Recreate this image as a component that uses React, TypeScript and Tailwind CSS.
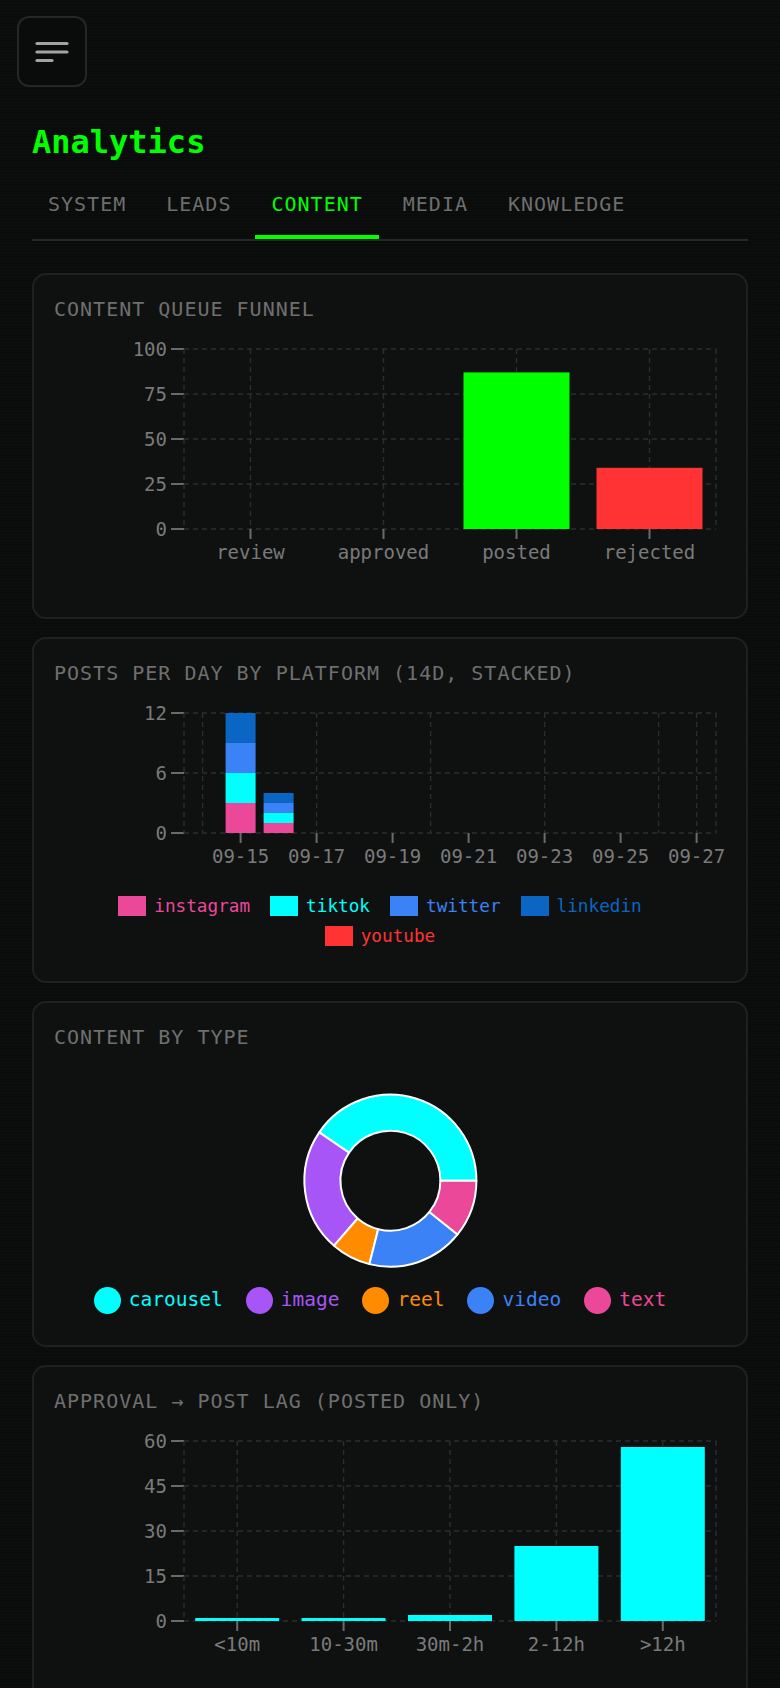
import React from 'react';

const tabs = ['SYSTEM', 'LEADS', 'CONTENT', 'MEDIA', 'KNOWLEDGE'];

// plot box shared by the bar charts (svg coords)
const PL = 130;
const PR = 662;
const PT = 26;

const funnel = [
  { label: 'review', value: 0, color: '#00ff00' },
  { label: 'approved', value: 0, color: '#00ff00' },
  { label: 'posted', value: 87, color: '#00ff00' },
  { label: 'rejected', value: 34, color: '#ff3333' },
];

const lag = [
  { label: '<10m', value: 1 },
  { label: '10-30m', value: 1 },
  { label: '30m-2h', value: 2 },
  { label: '2-12h', value: 25 },
  { label: '>12h', value: 58 },
];

const platforms = [
  { name: 'instagram', color: '#ec4899' },
  { name: 'tiktok', color: '#00ffff' },
  { name: 'twitter', color: '#3b82f6' },
  { name: 'linkedin', color: '#0a66c2' },
  { name: 'youtube', color: '#ff3333' },
];

// day index 1 = 09-15
const dailyPosts: { day: number; counts: number[] }[] = [
  { day: 1, counts: [3, 3, 3, 3, 0] },
  { day: 2, counts: [1, 1, 1, 1, 0] },
];

const types = [
  { name: 'carousel', value: 49, color: '#00ffff' },
  { name: 'image', value: 28, color: '#a855f7' },
  { name: 'reel', value: 9, color: '#ff8c00' },
  { name: 'video', value: 22, color: '#3b82f6' },
  { name: 'text', value: 13, color: '#ec4899' },
];

const GRID = '#2b2e2e';
const TICK = '#6a6a6a';
const LABEL = '#7a7a7a';

const Card: React.FC<{ title: string; children: React.ReactNode }> = ({ title, children }) => (
  <div className="h-[346px] rounded-[14px] border-2 border-[#1e2121] bg-[#0f1111] p-5">
    <div className="text-[20px] leading-[28px] tracking-[0.05em] text-[#6f6f6f]">{title}</div>
    {children}
  </div>
);

// dashed grid + y ticks
const YAxis: React.FC<{ ticks: number[]; max: number; bottom: number; vlines: number[] }> = ({ ticks, max, bottom, vlines }) => {
  const scale = (bottom - PT) / max;
  return (
    <g>
      {ticks.map((t) => {
        const y = bottom - t * scale;
        return (
          <g key={t}>
            <line x1={PL} x2={PR} y1={y} y2={y} stroke={GRID} strokeWidth={1.4} strokeDasharray="5 4" />
            <line x1={117} x2={PL} y1={y} y2={y} stroke={TICK} strokeWidth={2} />
            <text x={113} y={y + 7} textAnchor="end" fontSize={19} fill={LABEL}>
              {t}
            </text>
          </g>
        );
      })}
      {[PL, ...vlines, PR].map((x, i) => (
        <line key={i} x1={x} x2={x} y1={PT} y2={bottom} stroke={GRID} strokeWidth={1.4} strokeDasharray="5 4" />
      ))}
    </g>
  );
};

const CategoryBars: React.FC<{
  data: { label: string; value: number; color?: string }[];
  ticks: number[];
  max: number;
  barWidth: number;
  color: string;
}> = ({ data, ticks, max, barWidth, color }) => {
  const bottom = 206;
  const step = (PR - PL) / data.length;
  const centers = data.map((_, i) => PL + step * (i + 0.5));
  const scale = (bottom - PT) / max;
  return (
    <svg width={672} height={250} className="block overflow-visible">
      <YAxis ticks={ticks} max={max} bottom={bottom} vlines={centers} />
      {data.map((d, i) => (
        <g key={d.label}>
          {d.value > 0 && (
            <rect
              x={centers[i] - barWidth / 2}
              y={bottom - d.value * scale}
              width={barWidth}
              height={d.value * scale}
              fill={d.color || color}
            />
          )}
          <line x1={centers[i]} x2={centers[i]} y1={bottom} y2={bottom + 10} stroke={TICK} strokeWidth={2} />
          <text x={centers[i]} y={bottom + 30} textAnchor="middle" fontSize={19} fill={LABEL}>
            {d.label}
          </text>
        </g>
      ))}
    </svg>
  );
};

const StackedDaily: React.FC = () => {
  const bottom = 146;
  const dayX = (i: number) => 148.6 + i * 38;
  const scale = (bottom - PT) / 12;
  const labels = ['09-15', '09-17', '09-19', '09-21', '09-23', '09-25', '09-27'];
  return (
    <svg width={672} height={204} className="block overflow-visible">
      <YAxis ticks={[0, 6, 12]} max={12} bottom={bottom} vlines={[0, 3, 6, 9, 12, 13].map(dayX)} />
      {dailyPosts.map((d) => {
        let acc = 0;
        return (
          <g key={d.day}>
            {d.counts.map((c, k) => {
              if (!c) return null;
              const y = bottom - (acc + c) * scale;
              acc += c;
              return <rect key={k} x={dayX(d.day) - 15} y={y} width={30} height={c * scale} fill={platforms[k].color} />;
            })}
          </g>
        );
      })}
      {labels.map((l, i) => {
        const x = dayX(1 + i * 2);
        return (
          <g key={l}>
            <line x1={x} x2={x} y1={bottom} y2={bottom + 10} stroke={TICK} strokeWidth={2} />
            <text x={x} y={bottom + 30} textAnchor="middle" fontSize={19} fill={LABEL}>
              {l}
            </text>
          </g>
        );
      })}
    </svg>
  );
};

const Donut: React.FC = () => {
  const cx = 336.4;
  const cy = 129.7;
  const ro = 86;
  const ri = 50;
  const total = types.reduce((s, t) => s + t.value, 0);
  const pt = (deg: number, r: number) => {
    const a = (deg * Math.PI) / 180;
    return `${(cx + r * Math.cos(a)).toFixed(2)} ${(cy - r * Math.sin(a)).toFixed(2)}`;
  };
  let start = 0;
  return (
    <svg width={672} height={220} className="block">
      {types.map((t) => {
        const sweep = (t.value / total) * 360;
        const a0 = start;
        const a1 = start + sweep;
        start = a1;
        const large = sweep > 180 ? 1 : 0;
        const d = `M ${pt(a0, ro)} A ${ro} ${ro} 0 ${large} 0 ${pt(a1, ro)} L ${pt(a1, ri)} A ${ri} ${ri} 0 ${large} 1 ${pt(a0, ri)} Z`;
        return <path key={t.name} d={d} fill={t.color} stroke="#ffffff" strokeWidth={2} strokeLinejoin="round" />;
      })}
    </svg>
  );
};

export default function App() {
  return (
    <div className="min-h-screen bg-[#0a0c0c] bg-[repeating-linear-gradient(to_bottom,rgba(255,255,255,0.012)_0px,rgba(255,255,255,0.012)_1px,transparent_1px,transparent_3px)] pb-10 font-['DejaVu_Sans_Mono',monospace]">
      <div className="pt-4 pl-[17px]">
        <button className="flex h-[71px] w-[70px] items-center justify-center rounded-[12px] border-2 border-[#242727] bg-[#0a0c0c]">
          <svg width={34} height={24} viewBox="0 0 34 24">
            <g stroke="#a3a3a3" strokeWidth={3.2} strokeLinecap="round">
              <line x1={2} y1={3.5} x2={32} y2={3.5} />
              <line x1={2} y1={12} x2={32} y2={12} />
              <line x1={2} y1={20.5} x2={17} y2={20.5} />
            </g>
          </svg>
        </button>
      </div>

      <div className="px-8">
        <h1 className="mt-[35px] text-[32px] font-bold leading-[40px] text-[#00ff00]">Analytics</h1>

        <div className="mt-[28px] flex gap-2 border-b-2 border-[#262828]">
          {tabs.map((t) => (
            <div
              key={t}
              className={
                t === 'CONTENT'
                  ? 'border-b-4 border-[#00ff00] px-4 pb-[17px] text-[20px] leading-[28px] tracking-[0.05em] text-[#00ff00]'
                  : 'border-b-4 border-transparent px-4 pb-[17px] text-[20px] leading-[28px] tracking-[0.05em] text-[#6e6e6e]'
              }
            >
              {t}
            </div>
          ))}
        </div>

        <div className="mt-8 flex flex-col gap-[18px]">
          <Card title="CONTENT QUEUE FUNNEL">
            <CategoryBars data={funnel} ticks={[0, 25, 50, 75, 100]} max={100} barWidth={106} color="#00ff00" />
          </Card>

          <Card title="POSTS PER DAY BY PLATFORM (14D, STACKED)">
            <StackedDaily />
            <div className="flex flex-wrap justify-center gap-x-5 pr-5 text-[17.7px] leading-[30px]">
              {platforms.map((p) => (
                <div key={p.name} className="flex items-center gap-2">
                  <span className="h-5 w-7" style={{ backgroundColor: p.color }} />
                  <span style={{ color: p.color }}>{p.name}</span>
                </div>
              ))}
            </div>
          </Card>

          <Card title="CONTENT BY TYPE">
            <Donut />
            <div className="mt-[15px] flex justify-center gap-x-[23px] pr-5 text-[19.5px] leading-[28px]">
              {types.map((t) => (
                <div key={t.name} className="flex items-center gap-2">
                  <span className="h-[27px] w-[27px] rounded-full" style={{ backgroundColor: t.color }} />
                  <span style={{ color: t.color }}>{t.name}</span>
                </div>
              ))}
            </div>
          </Card>

          <Card title="APPROVAL → POST LAG (POSTED ONLY)">
            <CategoryBars data={lag} ticks={[0, 15, 30, 45, 60]} max={60} barWidth={84} color="#00ffff" />
          </Card>
        </div>
      </div>
    </div>
  );
}
